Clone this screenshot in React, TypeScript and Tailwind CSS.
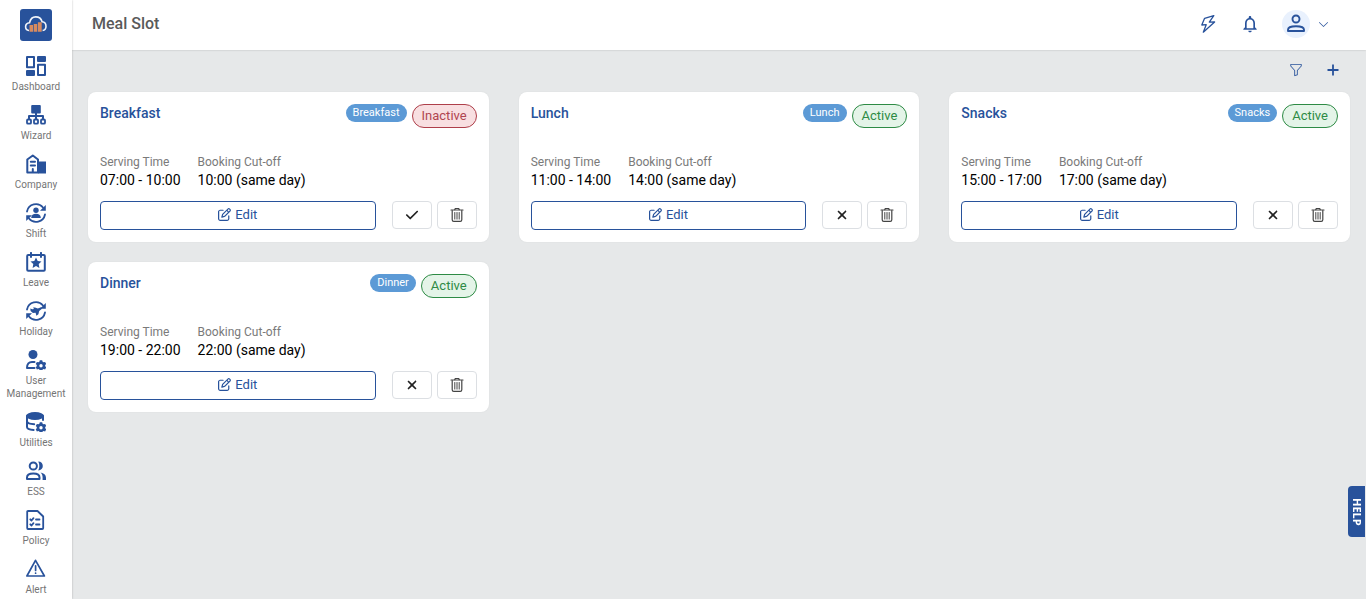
import { useState, type ReactNode } from "react";
import { BsFunnel, BsChevronDown } from "react-icons/bs";
import { FaCheck, FaRegPenToSquare, FaXmark } from "react-icons/fa6";
import { MdNotificationsNone } from "react-icons/md";

type Slot = {
  name: string;
  serving: string;
  cutoff: string;
  active: boolean;
};

const initialSlots: Slot[] = [
  { name: "Breakfast", serving: "07:00 - 10:00", cutoff: "10:00 (same day)", active: false },
  { name: "Lunch", serving: "11:00 - 14:00", cutoff: "14:00 (same day)", active: true },
  { name: "Snacks", serving: "15:00 - 17:00", cutoff: "17:00 (same day)", active: true },
  { name: "Dinner", serving: "19:00 - 22:00", cutoff: "22:00 (same day)", active: true },
];

function NavIcon({ children }: { children: ReactNode }) {
  return (
    <svg
      viewBox="0 0 20 20"
      className="size-5"
      fill="none"
      stroke="currentColor"
      strokeWidth="2"
      strokeLinecap="round"
      strokeLinejoin="round"
      aria-hidden="true"
    >
      {children}
    </svg>
  );
}

// Small cog used by User Management and Utilities
const Cog = () => (
  <g stroke="none" fill="currentColor">
    <path
      fillRule="evenodd"
      d="M13.800 10.200h2.400l.4 1.500 1 .6 1.500-.4 1.200 2.100-1.100 1v1.300l1.100 1-1.200 2.100-1.500-.4-1 .6-.3.900h-2.600l-.3-.9-1-.6-1.500.4-1.200-2.100 1.100-1V15l-1.100-1 1.200-2.100 1.500.4 1-.6zM15 14a1.700 1.700 0 1 0 0 3.400 1.700 1.700 0 0 0 0-3.400z"
    />
  </g>
);

// Circular arrows used by Shift and Holiday
const Cycle = () => (
  <>
    <path d="M1 8.500A9.100 9.100 0 0 1 17 4.500M19 11.500A9.100 9.100 0 0 1 3 15.500" strokeWidth="1.800" />
    <path d="M19.800 2v5.800H14zM.2 18v-5.800H6z" fill="currentColor" stroke="none" />
  </>
);

const navItems: { label: string; icon: ReactNode }[] = [
  {
    label: "Dashboard",
    icon: (
      <>
        <path d="M1 1h7v10.200H1zM12 8.800h7V19h-7z" />
        <path d="M12 1h7v4h-7zM1 15h7v4H1z" fill="currentColor" />
      </>
    ),
  },
  {
    label: "Wizard",
    icon: (
      <>
        <rect x="5.200" y="0" width="9.600" height="8.600" rx="1" fill="currentColor" stroke="none" />
        <path d="M10 8v6M3 13.500V11h14v2.500" />
        <rect x="1" y="14.500" width="4" height="4.200" rx="1" strokeWidth="1.800" />
        <rect x="8" y="14.500" width="4" height="4.200" rx="1" strokeWidth="1.800" />
        <rect x="15" y="14.500" width="4" height="4.200" rx="1" strokeWidth="1.800" />
      </>
    ),
  },
  {
    label: "Company",
    icon: (
      <>
        <path d="M1.300 18.500V5.500L6.800 1.500l5.200 4v13zM6.800 18v-3" />
        <path d="M4.800 7.800H9M4.800 11.500H9" />
        <path d="M12 7.500h8v12h-8z" fill="currentColor" stroke="none" />
      </>
    ),
  },
  {
    label: "Shift",
    icon: (
      <>
        <Cycle />
        <circle cx="10" cy="7.300" r="2.700" fill="currentColor" stroke="none" />
        <path d="M5.200 15c0-2.900 2-4.200 4.800-4.200s4.800 1.300 4.800 4.200z" fill="currentColor" stroke="none" />
      </>
    ),
  },
  {
    label: "Leave",
    icon: (
      <>
        <rect x="1.200" y="3" width="17.600" height="15.800" rx="1" />
        <path d="M5 .9V5M15 .9V5" />
        <path
          d="M10 5.600l1.700 3.400 3.800.5-2.800 2.600.7 3.800-3.400-1.900-3.400 1.900.7-3.800-2.800-2.600 3.800-.5z"
          fill="currentColor"
          stroke="none"
        />
      </>
    ),
  },
  {
    label: "Holiday",
    icon: (
      <>
        <Cycle />
        <path
          d="M4.300 7.400l2 .8 1.700-.2-1-1.400 2-.2 2.800 1 2.600-1c1.600-.4 2.300.8 1 1.800l-2.200 1.700-.8 3.300-2 1.500-.8-2.900-2.700.2-2.300-2z"
          fill="currentColor"
          stroke="none"
        />
      </>
    ),
  },
  {
    label: "User Management",
    icon: (
      <>
        <circle cx="7" cy="4.500" r="4.500" fill="currentColor" stroke="none" />
        <path d="M8.500 18H1c0-4.200 2-6 5-6h2.500" />
        <Cog />
      </>
    ),
  },
  {
    label: "Utilities",
    icon: (
      <>
        <ellipse cx="9" cy="4" rx="9" ry="4" fill="currentColor" stroke="none" />
        <path d="M1 4v11c0 1.600 3 2.700 6.600 2.900M17 4v4M1 9.500c.5 1.500 3.500 2.600 7.200 2.700" />
        <Cog />
      </>
    ),
  },
  {
    label: "ESS",
    icon: (
      <>
        <circle cx="7.300" cy="5" r="3.600" />
        <path d="M1 18v-1.500c0-2.600 2.600-4 6.300-4s6.200 1.400 6.200 4V18z" />
        <path
          d="M12.200.6c3 0 4.600 2 4.600 4.400s-1.600 4.400-4.600 4.400c1.500-2.400 1.500-6.400 0-8.800zM14.500 11.500c3.400.6 5.500 2.400 5.500 5.200v2.200h-3.400v-2.400c0-2-.6-3.600-2.100-5z"
          fill="currentColor"
          stroke="none"
        />
      </>
    ),
  },
  {
    label: "Policy",
    icon: (
      <>
        <path d="M1.200 1.800c0-.5.300-.8.800-.8h9.500l5.700 5.500V18c0 .6-.4 1-1 1H2c-.5 0-.8-.4-.8-1z" strokeWidth="1.800" />
        <path d="M4.300 9.300l1.200 1.200 2-2.400M4.300 14.300l1.200 1.200 2-2.400M10 9.500h3.500M10 14.500h3.500" strokeWidth="1.800" />
      </>
    ),
  },
  {
    label: "Alert",
    icon: (
      <>
        <path d="M9.500 1.300L18.400 17H.9z" strokeWidth="1.700" />
        <path d="M9.600 6.800v4.700M9.600 14v.2" strokeWidth="1.700" />
      </>
    ),
  },
];

function Logo() {
  return (
    <svg viewBox="0 0 32 32" className="size-8" role="img" aria-label="Home">
      <rect width="32" height="32" rx="3" fill="#28529b" />
      <path
        d="M9 21.500c-2.200-.3-3.400-1.900-3.400-3.800s1.500-3.800 4-4C10.400 10 12.700 7.900 15.700 7.900c3.300 0 5.600 2 6.400 4.900 2.500.3 3.900 2.100 3.900 4.400s-1.200 4-3.400 4.300"
        fill="none"
        stroke="#f1f4fa"
        strokeWidth="1.600"
      />
      <path d="M9.500 16h3.500v6.700H9.500zM13.700 15h3.500v7.700h-3.500zM17.900 13.300h3.800v9.400h-3.800z" fill="#d78b60" />
    </svg>
  );
}

function UserIcon() {
  return (
    <svg viewBox="0 0 20 20" className="size-5" fill="none" stroke="currentColor" strokeWidth="1.900" aria-hidden="true">
      <circle cx="10" cy="5" r="3.500" />
      <path d="M2 17v-1.200c0-2.200 3.500-3.500 8-3.500s8 1.300 8 3.500V17z" strokeLinejoin="round" />
    </svg>
  );
}

function BoltIcon() {
  return (
    <svg viewBox="0 0 20 20" className="size-5" fill="none" stroke="currentColor" strokeWidth="1.300" aria-hidden="true">
      <path d="M15.800 1.600L6.600 4.300 3.800 11l4.400-.3-2.900 7.500L16.600 7.900l-5.300.2z" strokeLinejoin="round" />
    </svg>
  );
}

function TrashIcon() {
  return (
    <svg viewBox="0 0 16 16" className="size-4" fill="none" stroke="currentColor" strokeLinecap="round" aria-hidden="true">
      <path d="M2 3h12M5.500 3l.8-1.500h3.400l.8 1.500" strokeWidth="1.200" />
      <path d="M3.200 3.500v9.300c0 1 .6 1.600 1.600 1.600h6.400c1 0 1.600-.6 1.600-1.600V3.500" strokeWidth="1.200" />
      <path d="M5.800 5.500v6.600M8 5.500v6.600M10.200 5.500v6.600" />
    </svg>
  );
}

function Sidebar() {
  return (
    <aside className="z-10 flex w-18 shrink-0 flex-col items-center bg-white pt-[9px] shadow-[0_0_2px_rgba(0,0,0,0.25)]">
      <a href="#home">
        <Logo />
      </a>
      <nav className="mt-[15px] flex w-full flex-col gap-3">
        {navItems.map((item) => (
          <a
            key={item.label}
            href={"#" + item.label}
            className="flex flex-col items-center gap-1 text-center text-[10px] leading-[13px] text-[#757575]"
          >
            <span className="text-[#28529b]">
              <NavIcon>{item.icon}</NavIcon>
            </span>
            {item.label}
          </a>
        ))}
      </nav>
    </aside>
  );
}

function Header() {
  return (
    <header className="flex h-[50px] items-center justify-between bg-white pr-[37px] pb-0.5 pl-5 shadow-[0_0_2px_rgba(0,0,0,0.2)]">
      <h1 className="text-base font-medium text-[#5a5a5a]">Meal Slot</h1>
      <div className="flex items-center text-[#28529b]">
        <button type="button" aria-label="Quick actions">
          <BoltIcon />
        </button>
        <button type="button" aria-label="Notifications" className="ml-[22px]">
          <MdNotificationsNone className="size-5" />
        </button>
        <button type="button" aria-label="Account" className="ml-[22px] flex items-center gap-2">
          <span className="flex size-7 items-center justify-center rounded-full bg-[#e9f1fd]">
            <UserIcon />
          </span>
          <BsChevronDown className="size-[11px]" />
        </button>
      </div>
    </header>
  );
}

function SlotCard({ slot, onToggle, onDelete }: { slot: Slot; onToggle: () => void; onDelete: () => void }) {
  return (
    <article className="rounded-lg bg-white p-3 shadow-[0_0_2px_rgba(0,0,0,0.06)]">
      <div className="flex h-[49px] items-start justify-between">
        <h2 className="text-sm leading-[18px] font-medium text-[#28529b]">{slot.name}</h2>
        <div className="flex items-start gap-[5px]">
          <span className="rounded-full bg-[#5c9ad6] px-[7px] text-[11px] leading-[18px] text-white">{slot.name}</span>
          <span
            className={
              slot.active
                ? "rounded-full border border-[#2e8b45] bg-[#e4f4e8] px-[9px] text-[13px] leading-[22px] text-[#2e8b45]"
                : "rounded-full border border-[#ae3f4a] bg-[#f8dfe1] px-[9px] text-[13px] leading-[22px] text-[#b04550]"
            }
          >
            {slot.active ? "Active" : "Inactive"}
          </span>
        </div>
      </div>

      <dl className="flex gap-[17px]">
        <div>
          <dt className="text-xs leading-[18px] text-[#7a7a7a]">Serving Time</dt>
          <dd className="text-sm leading-[18px] text-black">{slot.serving}</dd>
        </div>
        <div>
          <dt className="text-xs leading-[18px] text-[#7a7a7a]">Booking Cut-off</dt>
          <dd className="text-sm leading-[18px] text-black">{slot.cutoff}</dd>
        </div>
      </dl>

      <div className="mt-3 flex gap-[5px]">
        <button
          type="button"
          className="mr-[11px] flex h-[29px] flex-1 items-center justify-center gap-1 rounded border border-[#28529b] pb-0.5 text-[13px] text-[#28529b]"
        >
          <FaRegPenToSquare className="size-[13px]" />
          Edit
        </button>
        <button
          type="button"
          onClick={onToggle}
          aria-label={slot.active ? "Deactivate" : "Activate"}
          className="flex h-7 w-10 items-center justify-center rounded border border-[#dcdfe3] text-[#222]"
        >
          {slot.active ? <FaXmark className="size-[14px]" /> : <FaCheck className="size-[14px]" />}
        </button>
        <button
          type="button"
          onClick={onDelete}
          aria-label="Delete"
          className="flex h-7 w-10 items-center justify-center rounded border border-[#dcdfe3] text-[#444]"
        >
          <TrashIcon />
        </button>
      </div>
    </article>
  );
}

export default function App() {
  const [slots, setSlots] = useState(initialSlots);

  const toggle = (name: string) =>
    setSlots(slots.map((s) => (s.name === name ? { ...s, active: !s.active } : s)));

  return (
    <div className="flex h-screen overflow-hidden bg-[#e6e8e9] font-[Roboto,sans-serif]">
      <Sidebar />

      <div className="min-w-0 flex-1">
        <Header />
        <main className="px-4">
          {/* Toolbar */}
          <div className="flex h-[42px] items-center justify-end gap-6 pr-[11px] pb-0.5 text-[#28529b]">
            <button type="button" aria-label="Filter">
              <BsFunnel className="size-[14px]" />
            </button>
            <button type="button" aria-label="Add meal slot">
              <svg viewBox="0 0 12 12" className="size-3" stroke="currentColor" strokeWidth="1.800" aria-hidden="true">
                <path d="M6 .5v11M.5 6h11" />
              </svg>
            </button>
          </div>

          <div className="grid grid-cols-3 gap-x-[30px] gap-y-5">
            {slots.map((slot) => (
              <SlotCard
                key={slot.name}
                slot={slot}
                onToggle={() => toggle(slot.name)}
                onDelete={() => setSlots(slots.filter((s) => s.name !== slot.name))}
              />
            ))}
          </div>
        </main>
      </div>

      {/* Help tab pinned to the window edge */}
      <button
        type="button"
        className="fixed right-px bottom-[62px] flex h-[51px] w-[17px] items-center justify-center rounded-l bg-[#28529b] font-['Open_Sans',sans-serif] text-[11px] font-bold text-white [writing-mode:vertical-rl]"
      >
        HELP
      </button>
    </div>
  );
}
